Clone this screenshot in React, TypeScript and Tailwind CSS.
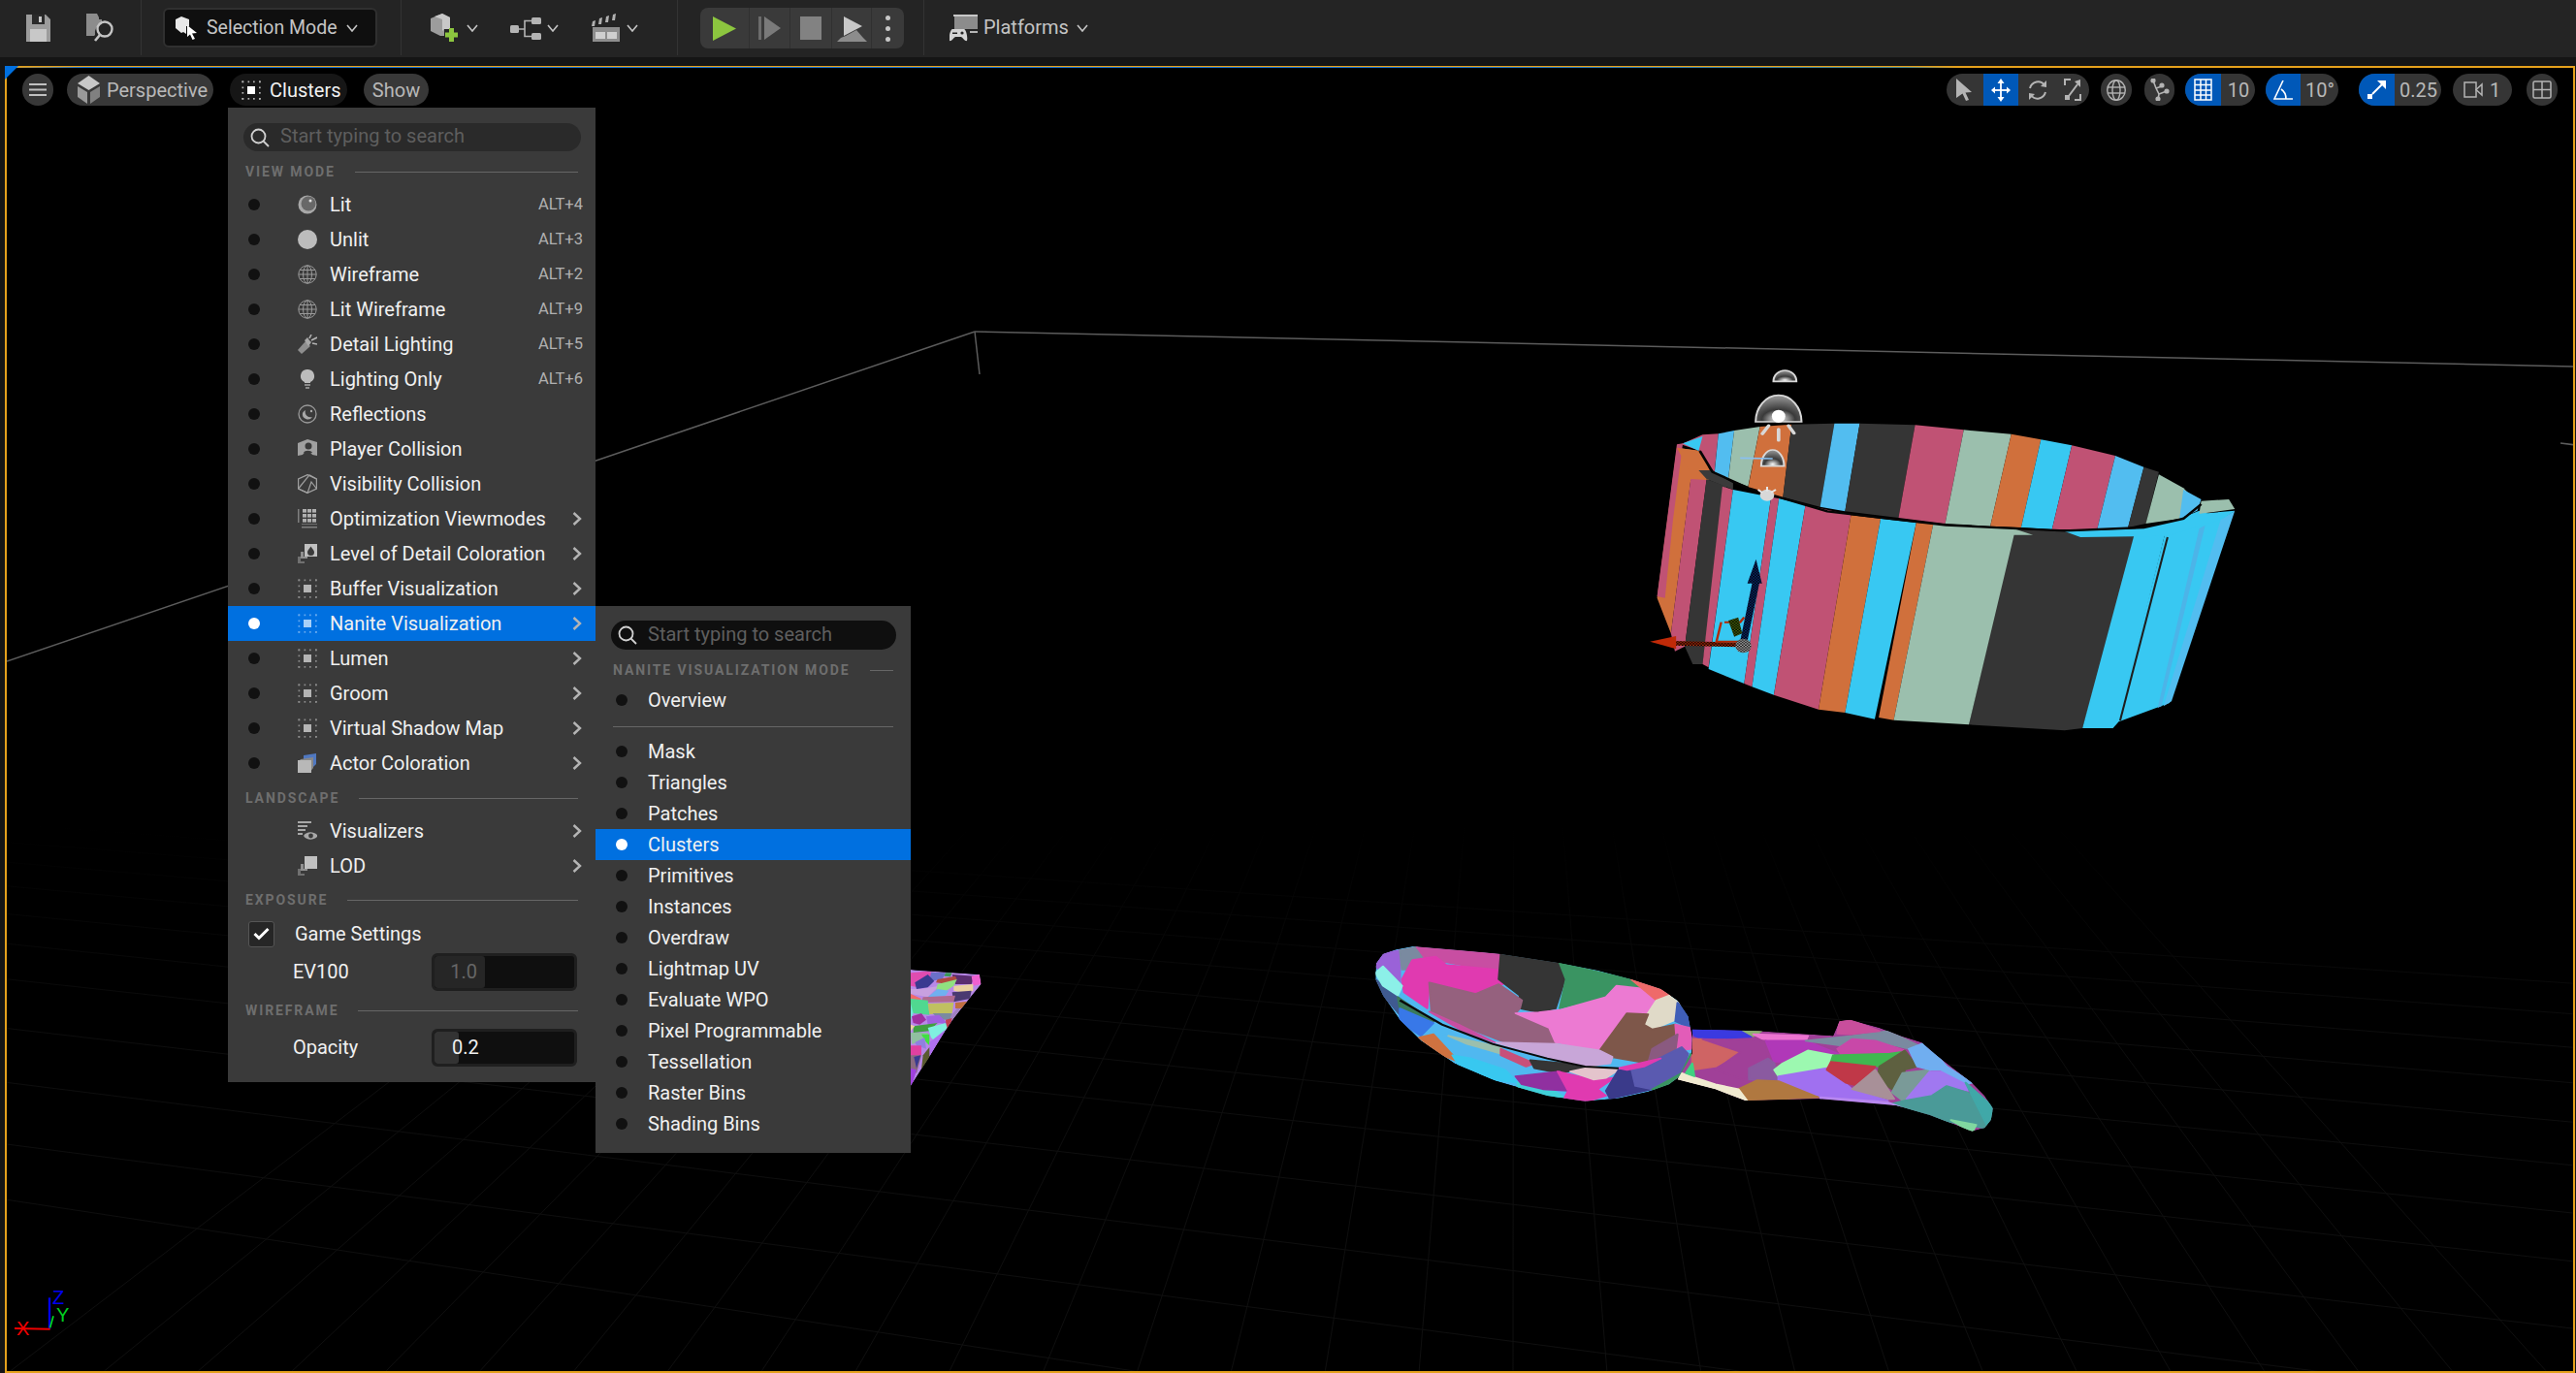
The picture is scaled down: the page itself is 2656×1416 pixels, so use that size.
import React from "react";

type Poly = [string, string];

const ringPolys: Poly[] = [
  ["#d0703c", "120,275 180,285 215,375 155,375 105,850 70,740"],
  ["#c05274", "120,265 135,262 110,500 90,740 70,735"],
  ["#c05274", "155,372 195,375 140,890 115,905 105,850"],
  ["#353535", "195,372 245,395 185,945 160,945 140,890"],
  ["#c05274", "235,395 262,405 200,955 185,945"],
  ["#38c8f2", "262,405 358,428 290,1005 200,960"],
  ["#c05274", "358,428 378,432 310,1015 290,1005"],
  ["#38c8f2", "378,432 445,452 365,1040 310,1015"],
  ["#c05274", "445,452 560,484 478,1085 365,1040"],
  ["#d0703c", "560,484 635,495 545,1095 478,1085"],
  ["#38c8f2", "635,495 725,507 620,1115 545,1095"],
  ["#d0703c", "725,507 768,511 668,1118 630,1110"],
  ["#353535", "972,528 1100,533 1280,525 1290,548 1145,1143 1100,1150 858,1132"],
  ["#9bbfad", "768,511 972,526 1020,545 972,545 858,1132 668,1118"],
  ["#38c8f2", "1280,525 1360,510 1235,1125 1222,1143 1145,1143"],
  ["#38c8f2", "1360,510 1440,470 1500,495 1365,1065 1232,1125"],
  ["#52bdf0", "1495,495 1530,470 1370,1060 1350,1075"],
  ["#4cb4e8", "1440,525 1455,515 1345,1075 1335,1080"],
  ["#c05274", "185,235 225,232 215,350 205,340 180,285 130,265"],
  ["#52bdf0", "225,232 265,222 250,370 215,355"],
  ["#9bbfad", "265,222 330,210 300,395 250,372"],
  ["#d0703c", "330,210 410,203 388,430 300,398"],
  ["#353535", "410,203 518,200 482,458 388,428"],
  ["#52bdf0", "518,200 582,200 545,472 482,458"],
  ["#353535", "582,200 722,205 680,492 545,472"],
  ["#c05274", "722,205 845,220 798,510 680,492"],
  ["#9bbfad", "845,220 965,233 912,518 798,510"],
  ["#d0703c", "965,233 1040,250 990,522 912,518"],
  ["#38c8f2", "1040,250 1118,268 1068,528 990,522"],
  ["#c05274", "1118,268 1228,300 1182,528 1068,528"],
  ["#52bdf0", "1228,300 1300,335 1260,522 1182,528"],
  ["#353535", "1300,335 1338,350 1305,510 1260,522"],
  ["#9bbfad", "1338,358 1400,400 1440,450 1390,495 1305,510"],
  ["#52bdf0", "1400,405 1445,435 1435,470 1390,495"],
  ["#9bbfad", "1445,440 1515,435 1530,465 1440,480"],
  ["#38c8f2", "1100,534 1300,525 1440,480 1530,470 1500,495 1360,548 1140,552"],
  ["#d0703c", "120,275 175,285 215,375 160,368"],
  ["#38c8f2", "135,262 185,240 175,285"],
  ["#3a3a3a", "205,345 262,385 262,405 195,372 175,345"],
];

const bowlOutline =
  "42,130 44,100 60,72 90,58 130,48 240,60 340,72 480,100 570,122 650,150 720,180 760,215 785,265 795,330 793,390 775,440 740,475 690,498 620,518 540,527 450,510 330,465 230,410 150,340 100,275 60,200 42,150";

const handleOutline =
  "795,305 950,310 1130,325 1145,280 1170,275 1240,300 1290,325 1340,345 1375,385 1420,430 1460,470 1490,510 1510,550 1505,585 1490,610 1460,620 1420,600 1360,570 1280,540 1100,520 920,525 850,490 760,460 795,380";

const bowlPolys: Poly[] = [
  ["#9a62d8", "42,110 60,70 100,60 100,170 60,130"],
  ["#7a8aa0", "100,60 140,50 160,80 120,120 105,120"],
  ["#c84ea2", "140,50 340,72 345,130 330,125 160,85"],
  ["#e03ab0", "105,150 130,90 185,80 210,105 290,115 330,120 345,165 280,195 170,160 165,240 110,190"],
  ["#353535", "340,72 480,100 497,130 470,240 430,252 385,240 385,200 335,150"],
  ["#3a9462", "480,100 650,150 670,178 615,170 590,205 480,240 495,150"],
  ["#95617e", "170,160 280,195 335,165 390,215 385,240 375,255 460,300 470,350 350,345 240,290 175,250"],
  ["#ec7ad2", "375,255 430,252 480,245 590,205 615,170 690,180 708,215 708,260 640,255 590,340 575,370 470,345 455,300"],
  ["#ee6a6a", "650,150 720,180 745,198 710,215"],
  ["#e0dac8", "710,215 740,200 765,225 755,275 700,305 680,290 690,255"],
  ["#7e574a", "640,255 690,258 680,290 700,305 755,290 765,320 700,365 690,410 600,390 575,370"],
  ["#3f5eb8", "760,222 785,260 790,300 755,280"],
  ["#e25cb8", "755,290 790,300 795,365 760,370"],
  ["#8a5a80", "700,365 760,320 755,370 690,410"],
  ["#c8a6d8", "325,345 470,350 575,370 605,390 600,410 540,420 450,390"],
  ["#c84ea2", "170,250 240,290 325,345 250,310"],
  ["#3f5a90", "42,150 100,210 100,260 60,200"],
  ["#8cf0e8", "42,130 60,110 105,170 95,200 60,170"],
  ["#3a7a5a", "95,205 180,280 160,285 100,240"],
  ["#3878e8", "100,240 180,285 150,325 100,280"],
  ["#50b8f0", "190,315 330,370 400,420 450,440 380,450 240,410 150,330"],
  ["#cf7240", "145,330 180,320 240,405 200,385"],
  ["#38c8f0", "225,385 270,395 350,430 380,470 320,460 240,415"],
  ["#9bbfad", "215,325 340,360 340,380 260,350"],
  ["#40d0d8", "380,470 460,490 490,515 450,515 380,485"],
  ["#c8507a", "340,365 420,410 400,420 340,385"],
  ["#353535", "410,400 490,410 540,425 480,440 420,425"],
  ["#9030a0", "375,450 480,435 500,495 440,490 390,475"],
  ["#e03ab0", "475,435 560,460 610,455 570,490 590,510 540,530 490,520 500,495"],
  ["#e4c4cc", "505,435 560,420 620,430 590,455 560,460"],
  ["#3a3a8a", "590,495 620,430 650,425 660,480 700,490 600,520"],
  ["#5a5ab0", "650,425 700,405 770,360 785,380 770,450 700,490 660,480"],
  ["#e03ab0", "620,425 720,395 680,420 640,430"],
  ["#3a9462", "770,440 792,380 798,400 780,450 710,500 700,490"],
];

const handlePolys: Poly[] = [
  ["#3a3ae0", "795,305 910,308 935,328 820,335 800,325"],
  ["#8cb070", "915,308 960,310 940,326"],
  ["#ec74d0", "940,320 1070,325 1065,340 970,340"],
  ["#cf6464", "795,335 820,335 910,375 850,420 795,430"],
  ["#a04098", "820,335 970,340 975,400 930,430 920,462 850,430 910,375"],
  ["#b038b8", "970,340 1065,340 1150,385 1075,370 1040,405 990,405"],
  ["#8a5aa0", "975,395 990,410 1000,465 930,460 930,425"],
  ["#9cf8b0", "1070,370 1130,385 1115,425 1000,450 990,430 1010,410"],
  ["#a070f0", "1000,450 1115,425 1175,490 1260,525 1100,515 1000,470"],
  ["#b07840", "905,490 950,462 1000,465 1095,515 925,525"],
  ["#f0ead0", "770,440 850,475 905,490 925,525 850,490 760,460"],
  ["#40d080", "795,410 800,450 780,440"],
  ["#7a8aa0", "1065,340 1175,325 1260,310 1350,365 1310,365 1230,340 1150,355"],
  ["#c848a8", "1140,365 1175,335 1230,340 1300,370 1265,380 1150,385"],
  ["#c84e9c", "1140,318 1145,280 1170,275 1240,310 1170,320"],
  ["#40b850", "1130,385 1265,380 1290,375 1240,420 1125,405"],
  ["#c03848", "1125,405 1230,420 1190,480 1160,470 1115,430"],
  ["#5e6040", "1240,420 1300,370 1330,420 1300,430 1295,480 1270,490 1235,460"],
  ["#7a9a98", "1295,440 1360,430 1360,460 1300,530 1270,500"],
  ["#a89098", "1175,490 1230,430 1275,520 1260,520"],
  ["#70aef0", "1310,365 1350,345 1400,420 1460,470 1445,475 1385,430 1360,430 1330,420"],
  ["#a078f0", "1305,520 1360,435 1385,435 1445,475 1450,495 1400,480 1360,510"],
  ["#4a9a98", "1270,535 1300,525 1365,510 1400,480 1450,500 1510,580 1490,610 1400,590"],
  ["#40a8a8", "1445,470 1515,550 1495,600"],
  ["#80d8a0", "1410,585 1470,600 1460,625"],
  ["#b888f0", "1100,515 1260,530 1290,545 1100,525"],
];

const triPolys: Poly[] = [
  ["#b888e8", "117,120 330,135 335,165 230,300 117,480"],
  ["#e04cb0", "117,130 165,125 195,130 160,150 140,175 117,170"],
  ["#6a70c8", "180,128 225,130 215,150 175,155"],
  ["#3a9a5a", "225,130 245,130 240,142 220,140"],
  ["#3a3a90", "130,160 170,135 190,155 170,175 135,180"],
  ["#5a2d70", "245,135 315,140 305,165 255,165"],
  ["#f060d0", "305,140 330,135 335,165 310,170"],
  ["#b04a40", "200,150 255,140 260,150 235,165 195,160"],
  ["#c8a0e0", "117,180 150,180 205,170 170,205 117,195"],
  ["#90e080", "200,165 260,150 250,170 220,190 195,185"],
  ["#ead0a0", "250,170 310,165 310,185 290,195 250,185"],
  ["#70b0f0", "170,205 200,180 235,185 225,200 185,205"],
  ["#4a3a70", "245,190 305,185 300,210 250,220"],
  ["#f06a6a", "117,195 150,210 145,215 117,210"],
  ["#b06a90", "155,205 255,200 250,220 150,222"],
  ["#50d890", "117,210 170,215 175,260 125,255 117,250"],
  ["#c0c060", "170,225 250,222 245,255 175,258"],
  ["#c07040", "255,222 295,218 275,240 255,240"],
  ["#7a8aa0", "185,255 245,255 240,275 205,275"],
  ["#70e8d8", "117,225 125,255 117,275"],
  ["#a030a0", "120,265 150,255 165,275 145,290 125,285"],
  ["#a060e0", "165,265 205,260 235,290 205,285 170,290"],
  ["#a080c0", "240,265 260,240 270,240 250,280"],
  ["#c04050", "225,275 245,270 240,295 228,305"],
  ["#40a040", "125,295 200,285 175,310 125,315"],
  ["#ead0a0", "117,290 130,295 117,310"],
  ["#80f0e0", "170,300 225,285 230,300 195,345 180,330"],
  ["#90c0a0", "117,315 170,315 175,340 120,350"],
  ["#40e040", "150,320 175,320 175,355 165,345"],
  ["#9080e0", "130,345 160,330 165,365 135,355"],
  ["#b070f0", "175,345 225,305 175,390"],
  ["#e040a0", "117,355 150,355 150,385 125,395 117,390"],
  ["#8a6a80", "117,385 150,385 135,440 117,430"],
  ["#3a3a90", "127,390 148,385 135,425"],
  ["#5a5a30", "155,385 175,360 175,395 150,430"],
  ["#a040e0", "117,425 135,430 125,465 117,480"],
];

const gridDepth = [-16, -15, -14, -13, -12, -11, -10, -9, -8, -7, -6, -5, -4, -3, -2, -1, 0, 1, 2, 3, 4, 5, 6, 7, 8, 9, 10, 11];
const gridCross: [number, number][] = [
  [1373, 0.152], [1297, 0.131], [1228, 0.125], [1165, 0.117], [1108, 0.11], [1067, 0.105],
  [1030, 0.098], [996, 0.092], [966, 0.086], [940, 0.08], [916, 0.074], [895, 0.068],
];

function Polys({ items, soft }: { items: Poly[]; soft?: boolean }) {
  return (
    <>
      {items.map(([fill, points], i) => (
        <polygon
          key={i}
          fill={fill}
          points={points}
          stroke={soft ? fill : undefined}
          strokeWidth={soft ? 5 : undefined}
          strokeLinejoin={soft ? "round" : undefined}
        />
      ))}
    </>
  );
}

function Dome({ cx, cy, r, ry }: { cx: number; cy: number; r: number; ry: number }) {
  return (
    <path
      d={`M${cx - r},${cy} A${r},${ry} 0 0 1 ${cx + r},${cy} Z`}
      fill="url(#domeFill)"
      stroke="#d8d8d8"
      strokeWidth="5"
    />
  );
}

function Scene() {
  return (
    <svg
      className="absolute left-[-7px] top-[-68px] w-[2656px] h-[1416px]"
      viewBox="0 0 2656 1416"
      xmlns="http://www.w3.org/2000/svg"
    >
      <defs>
        <linearGradient id="gridFade" gradientUnits="userSpaceOnUse" x1="0" y1="1416" x2="0" y2="850">
          <stop offset="0" stopColor="#0f0f0f" />
          <stop offset="0.6" stopColor="#0d0d0d" />
          <stop offset="1" stopColor="#000000" />
        </linearGradient>
        <radialGradient id="domeFill" cx="50%" cy="90%" r="80%">
          <stop offset="0" stopColor="#ffffff" />
          <stop offset="0.45" stopColor="#3a3a3a" />
          <stop offset="1" stopColor="#8a8a8a" />
        </radialGradient>
        <pattern id="checkBlue" width="8" height="8" patternUnits="userSpaceOnUse">
          <rect width="8" height="8" fill="#0a2a70" />
          <rect width="4" height="4" fill="#000000" />
          <rect x="4" y="4" width="4" height="4" fill="#000000" />
        </pattern>
        <pattern id="checkRed" width="8" height="8" patternUnits="userSpaceOnUse">
          <rect width="8" height="8" fill="#b02a08" />
          <rect width="4" height="4" fill="#000000" />
          <rect x="4" y="4" width="4" height="4" fill="#000000" />
        </pattern>
        <pattern id="checkGreen" width="8" height="8" patternUnits="userSpaceOnUse">
          <rect width="8" height="8" fill="#4a6a08" />
          <rect width="4" height="4" fill="#000000" />
          <rect x="4" y="4" width="4" height="4" fill="#000000" />
        </pattern>
        <pattern id="checkGray" width="8" height="8" patternUnits="userSpaceOnUse">
          <rect width="8" height="8" fill="#aaaaaa" />
          <rect width="4" height="4" fill="#111111" />
          <rect x="4" y="4" width="4" height="4" fill="#111111" />
        </pattern>
        <clipPath id="bowlClip">
          <polygon points={bowlOutline} />
        </clipPath>
        <clipPath id="handleClip">
          <polygon points={handleOutline} />
        </clipPath>
        <clipPath id="triClip">
          <polygon points="117,120 135,122 330,135 335,165 310,195 250,270 230,300 175,390 117,480" />
        </clipPath>
      </defs>

      <g stroke="url(#gridFade)" strokeWidth="1" fill="none">
        {gridDepth.map((k) => (
          <line key={k} x1={1560 + k * 97} y1={1416} x2={1560.5 + k * 97 * 0.45} y2={764} />
        ))}
        {gridCross.map(([y, s]) => (
          <line key={y} x1={0} y1={y - s * 900} x2={2656} y2={y + s * 1756} />
        ))}
      </g>

      <g stroke="#5c5c5c" strokeWidth="1.5" fill="none">
        <line x1="7" y1="682" x2="1005" y2="342" />
        <line x1="1005" y1="342" x2="2656" y2="378" />
        <line x1="1005" y1="342" x2="1010" y2="386" />
        <line x1="2640" y1="457" x2="2656" y2="459" />
      </g>

      <g transform="translate(1680 370) scale(0.408 0.3333)">
        <Polys items={ringPolys} />
        <polyline
          points="178,285 210,350 300,400 500,472 800,515 1100,532 1300,522 1400,495 1445,450"
          fill="none"
          stroke="#050505"
          strokeWidth="7"
        />
        <line x1="1360" y1="552" x2="1240" y2="1120" stroke="#1e1e1e" strokeWidth="5" />
        <Dome cx={393} cy={70} r={29} ry={34} />
        <Dome cx={377} cy={195} r={58} ry={82} />
        <ellipse cx="377" cy="178" rx="17" ry="20" fill="#ffffff" />
        <g stroke="#d8d8d8" strokeWidth="9" strokeLinecap="round" fill="none">
          <line x1="352" y1="207" x2="336" y2="232" />
          <line x1="377" y1="218" x2="377" y2="252" />
          <line x1="402" y1="207" x2="416" y2="230" />
        </g>
        <Dome cx={362} cy={332} r={29} ry={50} />
        <line x1="280" y1="307" x2="362" y2="309" stroke="#8ac0f0" strokeWidth="5" />
        <circle cx="348" cy="422" r="18" fill="#d8d8d8" />
        <g stroke="#e8e8e8" strokeWidth="5">
          <line x1="348" y1="396" x2="348" y2="410" />
          <line x1="325" y1="405" x2="336" y2="414" />
          <line x1="370" y1="405" x2="358" y2="414" />
        </g>
        <polyline points="320,690 288,880" stroke="url(#checkBlue)" strokeWidth="18" fill="none" />
        <polygon points="320,620 298,695 335,695" fill="url(#checkBlue)" />
        <line x1="110" y1="880" x2="285" y2="885" stroke="url(#checkRed)" strokeWidth="14" />
        <polygon points="52,875 118,858 118,898" fill="#c02a08" />
        <path d="M240,815 L280,815 L290,800 M232,815 L220,875 L290,875" fill="none" stroke="#b02a08" strokeWidth="6" />
        <path d="M250,810 L275,800 L285,850 L265,860 Z" fill="url(#checkGreen)" />
        <ellipse cx="288" cy="888" rx="20" ry="22" fill="url(#checkGray)" />
      </g>

      <g transform="translate(1400 960) scale(0.4337 0.3333)">
        <g clipPath="url(#bowlClip)">
          <polygon fill="#50b8f0" points={bowlOutline} />
          <Polys items={bowlPolys} soft />
        </g>
        <polyline
          points="100,215 200,290 320,350 450,395 540,420 620,425"
          fill="none"
          stroke="#0a0a0a"
          strokeWidth="6"
        />
        <g clipPath="url(#handleClip)">
          <polygon fill="#a04098" points={handleOutline} />
          <Polys items={handlePolys} soft />
        </g>
      </g>

      <g transform="translate(900 960) scale(0.3333)" clipPath="url(#triClip)">
        <Polys items={triPolys} />
      </g>

      <g transform="translate(0 1300) scale(0.3333)">
        <line x1="153" y1="115" x2="153" y2="212" stroke="#0000f0" strokeWidth="7" />
        <line x1="45" y1="210" x2="155" y2="212" stroke="#f00000" strokeWidth="6" />
        <line x1="155" y1="208" x2="165" y2="172" stroke="#00e020" strokeWidth="5" />
      </g>
      <g fontFamily="'Liberation Sans', sans-serif" fontSize="20">
        <text x="54" y="1345" fill="#0000f0">Z</text>
        <text x="58" y="1363" fill="#00d020">Y</text>
        <text x="17" y="1377" fill="#f00000">X</text>
      </g>
    </svg>
  );
}

function Chevron({ className }: { className: string }) {
  return (
    <svg className={className} viewBox="0 0 12 8" fill="none" stroke="#c4c4c4" strokeWidth="1.6">
      <polyline points="1,1 6,7 11,1" />
    </svg>
  );
}

function Divider({ className }: { className: string }) {
  return <div className={`w-px h-[57px] bg-[#333333] ${className}`} />;
}

function TopBar() {
  return (
    <div className="h-[59px] bg-[#242424] flex items-start shrink-0">
      <svg className="w-[25px] h-[28px] mt-[15px] ml-[27px]" viewBox="0 0 25 28">
        <path d="M0 0H20L25 5V28H0Z" fill="#9c9c9c" />
        <rect x="4" y="15" width="17" height="13" fill="#c8c8c8" />
        <rect x="6" y="0" width="13" height="10" fill="#2a2a2a" />
        <rect x="13" y="2" width="3" height="6" fill="#c8c8c8" />
      </svg>
      <svg className="w-[30px] h-[29px] mt-[14px] ml-[37px]" viewBox="0 0 30 29">
        <path d="M0 0H11L13 4V6H16V11A9 9 0 0 0 9 22L8 23H0Z" fill="#8c8c8c" />
        <circle cx="19" cy="16" r="7.5" fill="none" stroke="#c4c4c4" strokeWidth="2.4" />
        <line x1="14" y1="22" x2="9" y2="28" stroke="#c4c4c4" strokeWidth="2.6" />
      </svg>
      <Divider className="ml-[26px]" />
      <div className="ml-[22px] mt-[8px] w-[221px] h-[41px] rounded-md bg-[#0f0f0f] border-2 border-[#303030] flex items-center pl-[11px]">
        <svg className="w-[22px] h-[24px]" viewBox="0 0 22 24">
          <path d="M6 0L14 3V10L11 10L11 18L8 16L6 17L0 12V3Z" fill="#e8e8e8" />
          <path d="M12 9L22 17L17 17.5L20 23L17.5 24L15 18.5L12 21Z" fill="#ffffff" />
        </svg>
        <span className="ml-[10px] text-[19.5px] text-[#c4c4c4] leading-none">Selection Mode</span>
        <Chevron className="w-[12px] h-[8px] ml-[9px]" />
      </div>
      <Divider className="ml-[24px]" />
      <svg className="w-[30px] h-[29px] mt-[14px] ml-[30px]" viewBox="0 0 30 29">
        <path d="M12 0L20 4V16H14V23H10L0 18V5Z" fill="#9c9c9c" />
        <path d="M12 0L20 4V16H14L12 18V6L4 3Z" fill="#c8c8c8" />
        <rect x="19" y="15" width="5" height="14" fill="#8cc63f" />
        <rect x="15" y="19.5" width="13" height="5" fill="#8cc63f" />
      </svg>
      <Chevron className="w-[12px] h-[8px] mt-[25px] ml-[7px]" />
      <svg className="w-[32px] h-[23px] mt-[18px] ml-[33px]" viewBox="0 0 32 23">
        <rect x="0" y="8" width="9" height="8" rx="1.5" fill="#b4b4b4" />
        <rect x="22" y="0" width="10" height="7" rx="1.5" fill="#b4b4b4" />
        <rect x="22" y="16" width="10" height="7" rx="1.5" fill="#b4b4b4" />
        <path d="M9 12H15V3.5H22M15 12V19.5H22" fill="none" stroke="#b4b4b4" strokeWidth="1.6" />
      </svg>
      <Chevron className="w-[12px] h-[8px] mt-[25px] ml-[6px]" />
      <svg className="w-[29px] h-[29px] mt-[14px] ml-[34px]" viewBox="0 0 29 29">
        <g fill="#b0b0b0">
          <path d="M1 8L0 13H3L4 7Z" />
          <path d="M8 5L7 11H10L11 4Z" />
          <path d="M15 3L14 9H17L18 2Z" />
          <path d="M22 1L21 7H24L25 0Z" />
        </g>
        <rect x="1" y="14" width="28" height="15" fill="#8e8e8e" />
        <rect x="4" y="19" width="10" height="7" fill="#d0d0d0" />
        <rect x="16" y="19" width="10" height="7" fill="#d0d0d0" />
      </svg>
      <Chevron className="w-[12px] h-[8px] mt-[25px] ml-[7px]" />
      <Divider className="ml-[40px]" />
      <div className="ml-[23px] mt-[8px] w-[210px] h-[42px] rounded-lg bg-[#3a3a3a] flex">
        <div className="w-[51px] flex items-center justify-center border-r border-[#303030]">
          <svg className="w-[24px] h-[25px]" viewBox="0 0 24 25"><polygon points="0,0 24,12.5 0,25" fill="#8cc63f" /></svg>
        </div>
        <div className="w-[42px] flex items-center justify-center border-r border-[#303030]">
          <svg className="w-[23px] h-[24px]" viewBox="0 0 23 24">
            <rect x="0" y="0" width="3" height="24" fill="#6c6c6c" />
            <polygon points="6,0 23,12 6,24" fill="#7a7a7a" />
          </svg>
        </div>
        <div className="w-[43px] flex items-center justify-center border-r border-[#303030]">
          <div className="w-[22px] h-[24px] bg-[#828282]" />
        </div>
        <div className="w-[41px] flex items-start pt-[9px] justify-center border-r border-[#303030]">
          <svg className="w-[31px] h-[26px]" viewBox="0 0 31 26">
            <polygon points="7,0 26,10 7,20" fill="#c8c8c8" />
            <polygon points="4,22 9,20 20,14 27,22 31,26 0,26" fill="#8c8c8c" />
          </svg>
        </div>
        <div className="flex-1 flex flex-col items-center justify-center gap-[6px]">
          <div className="w-[5px] h-[5px] rounded-full bg-[#c8c8c8]" />
          <div className="w-[5px] h-[5px] rounded-full bg-[#c8c8c8]" />
          <div className="w-[5px] h-[5px] rounded-full bg-[#c8c8c8]" />
        </div>
      </div>
      <Divider className="ml-[20px]" />
      <svg className="w-[29px] h-[28px] mt-[15px] ml-[26px]" viewBox="0 0 29 28">
        <rect x="5" y="0" width="24" height="15" fill="#8c8c8c" />
        <rect x="4" y="0" width="25" height="2" fill="#c8c8c8" />
        <rect x="21" y="17" width="8" height="2" fill="#b4b4b4" />
        <path d="M3 15H15C17 15 19 23 18 27C16 28 14 24 12 23H6C4 24 2 28 0 27C-1 23 1 15 3 15Z" fill="#d4d4d4" />
        <circle cx="13" cy="19" r="1.6" fill="#242424" />
        <rect x="3" y="18.5" width="5" height="1.5" fill="#242424" />
      </svg>
      <span className="ml-[6px] mt-[17px] text-[20px] text-[#c4c4c4] leading-[22px]">Platforms</span>
      <Chevron className="w-[12px] h-[8px] mt-[25px] ml-[8px]" />
    </div>
  );
}

const pillBase = "h-[33px] rounded-full flex items-center";

function DottedSquare({ centerFill, dotFill }: { centerFill: string; dotFill: string }) {
  return (
    <svg className="w-[20px] h-[20px]" viewBox="0 0 20 20">
      <g fill={dotFill}>
        {[0.5, 6.5, 12, 18].map((v) => (
          <React.Fragment key={v}>
            <rect x={v} y={0.5} width={1.7} height={1.7} />
            <rect x={v} y={18} width={1.7} height={1.7} />
            <rect x={0.5} y={v} width={1.7} height={1.7} />
            <rect x={18} y={v} width={1.7} height={1.7} />
          </React.Fragment>
        ))}
      </g>
      <rect x="6" y="6" width="8" height="8" fill={centerFill} />
    </svg>
  );
}

function BlueCell({ className, children }: { className: string; children: React.ReactNode }) {
  return <div className={`bg-[#0058b8] h-full flex items-center justify-center ${className}`}>{children}</div>;
}

function ViewportBar() {
  return (
    <div className="relative flex items-center h-[33px] mt-[6px] pl-[16px] pr-[16px] text-[20px] text-[#b8b8b8]">
      <div className={`${pillBase} w-[32px] bg-[#383838] justify-center`}>
        <svg className="w-[18px] h-[15px]" viewBox="0 0 18 15" stroke="#c0c0c0" strokeWidth="2">
          <line x1="0" y1="2" x2="18" y2="2" />
          <line x1="0" y1="7.5" x2="18" y2="7.5" />
          <line x1="0" y1="13" x2="18" y2="13" />
        </svg>
      </div>
      <div className={`${pillBase} w-[151px] ml-[14px] bg-[#383838] pl-[11px]`}>
        <svg className="w-[23px] h-[29px]" viewBox="0 0 23 29">
          <polygon points="11.5,0 23,8 11.5,15 0,8" fill="#c8c8c8" />
          <polygon points="0,11 10,17 10,29 0,22" fill="#9a9a9a" />
          <polygon points="23,11 13,17 13,29 23,22" fill="#808080" />
        </svg>
        <span className="ml-[7px]">Perspective</span>
      </div>
      <div className={`${pillBase} w-[121px] ml-[17px] bg-[#161616] pl-[12px] text-[#f0f0f0]`}>
        <DottedSquare centerFill="#ffffff" dotFill="#b0b0b0" />
        <span className="ml-[9px]">Clusters</span>
      </div>
      <div className={`${pillBase} w-[67px] ml-[17px] bg-[#383838] justify-center`}>Show</div>

      <div className="ml-auto flex items-center">
        <div className={`${pillBase} w-[147px] bg-[#353535] overflow-hidden`}>
          <div className="w-[37px] flex justify-center">
            <svg className="w-[17px] h-[23px]" viewBox="0 0 17 23"><path d="M0 0L16 14L9.5 14.5L13 22L10 23L6.5 15.5L0 20Z" fill="#b4b4b4" /></svg>
          </div>
          <BlueCell className="w-[36px] ml-px">
            <svg className="w-[20px] h-[24px]" viewBox="0 0 20 24" fill="#ffffff">
              <rect x="9.1" y="3" width="1.8" height="18" />
              <rect x="2" y="11.1" width="16" height="1.8" />
              <polygon points="10,0 13.5,5 6.5,5" />
              <polygon points="10,24 13.5,19 6.5,19" />
              <polygon points="0,12 4,8.5 4,15.5" />
              <polygon points="20,12 16,8.5 16,15.5" />
            </svg>
          </BlueCell>
          <div className="w-[37px] ml-px flex justify-center">
            <svg className="w-[20px] h-[22px]" viewBox="0 0 20 22" fill="none" stroke="#b4b4b4" strokeWidth="2">
              <path d="M2 9A8.5 9 0 0 1 17 6" />
              <path d="M18 13A8.5 9 0 0 1 3 16" />
              <polygon points="19,1 19,8 13,7" fill="#b4b4b4" stroke="none" />
              <polygon points="1,21 1,14 7,15" fill="#b4b4b4" stroke="none" />
            </svg>
          </div>
          <div className="flex-1 flex justify-center">
            <svg className="w-[18px] h-[23px]" viewBox="0 0 18 23" fill="none" stroke="#b4b4b4" strokeWidth="2">
              <path d="M1 7V1H7M11 22H17V16" />
              <line x1="5" y1="18" x2="14" y2="6" />
              <polygon points="17,1 17,9 11,3" fill="#b4b4b4" stroke="none" />
              <rect x="1" y="17" width="5" height="5" fill="#b4b4b4" stroke="none" />
            </svg>
          </div>
        </div>
        <div className={`${pillBase} w-[32px] ml-[12px] bg-[#353535] justify-center`}>
          <svg className="w-[20px] h-[22px]" viewBox="0 0 20 22" fill="none" stroke="#b4b4b4" strokeWidth="1.4">
            <ellipse cx="10" cy="11" rx="9.3" ry="10.3" />
            <ellipse cx="10" cy="11" rx="4" ry="10.3" />
            <line x1="1" y1="8" x2="19" y2="8" />
            <line x1="1" y1="14" x2="19" y2="14" />
          </svg>
        </div>
        <div className={`${pillBase} w-[31px] ml-[13px] bg-[#353535] justify-center`}>
          <svg className="w-[20px] h-[23px]" viewBox="0 0 20 23" fill="none" stroke="#b4b4b4" strokeWidth="1.6">
            <path d="M3 2L6 10L9 16L17 13M6 10L12 8M9 16L8 22" />
            <circle cx="3" cy="2" r="1.8" fill="#b4b4b4" />
            <circle cx="12" cy="7" r="1.8" fill="#b4b4b4" />
            <circle cx="17" cy="13" r="1.8" fill="#b4b4b4" />
            <circle cx="8" cy="21" r="1.8" fill="#b4b4b4" />
          </svg>
        </div>
        <div className={`${pillBase} w-[72px] ml-[11px] bg-[#353535] overflow-hidden`}>
          <BlueCell className="w-[37px]">
            <svg className="w-[19px] h-[23px]" viewBox="0 0 19 23" fill="none" stroke="#ffffff" strokeWidth="1.5">
              <rect x="1" y="1" width="17" height="21" />
              <path d="M7 1V22M12.5 1V22M1 6.5H18M1 12H18M1 17H18" />
            </svg>
          </BlueCell>
          <span className="flex-1 text-center ml-px">10</span>
        </div>
        <div className={`${pillBase} w-[75px] ml-[11px] bg-[#353535] overflow-hidden`}>
          <BlueCell className="w-[36px]">
            <svg className="w-[20px] h-[20px]" viewBox="0 0 20 20" fill="none" stroke="#ffffff" strokeWidth="1.6">
              <path d="M10 0L1 19H20M8 9C11 11 13 15 13 19" />
            </svg>
          </BlueCell>
          <span className="flex-1 text-center ml-px">10°</span>
        </div>
        <div className={`${pillBase} w-[85px] ml-[21px] bg-[#353535] overflow-hidden`}>
          <BlueCell className="w-[37px]">
            <svg className="w-[19px] h-[19px]" viewBox="0 0 19 19" fill="#ffffff">
              <rect x="0" y="14" width="5" height="5" />
              <polygon points="19,0 19,9 10,0" />
              <line x1="5" y1="14" x2="15" y2="4" stroke="#ffffff" strokeWidth="2" />
            </svg>
          </BlueCell>
          <span className="flex-1 text-center ml-px">0.25</span>
        </div>
        <div className={`${pillBase} w-[61px] ml-[12px] bg-[#353535] pl-[11px]`}>
          <svg className="w-[20px] h-[17px]" viewBox="0 0 20 17" fill="none" stroke="#b4b4b4" strokeWidth="1.5">
            <rect x="1" y="1" width="12" height="15" />
            <path d="M13 8.5L19 3V14Z" />
          </svg>
          <span className="ml-[7px]">1</span>
        </div>
        <div className={`${pillBase} w-[32px] ml-[15px] bg-[#353535] justify-center`}>
          <svg className="w-[20px] h-[19px]" viewBox="0 0 20 19" fill="none" stroke="#b4b4b4" strokeWidth="1.5">
            <rect x="1" y="1" width="18" height="17" rx="1.5" />
            <path d="M10 1V18M1 9.5H19" />
          </svg>
        </div>
      </div>
    </div>
  );
}

const g = "#b0b0b0";

function IconLit() {
  return (
    <svg className="w-full h-full" viewBox="0 0 20 20">
      <circle cx="10" cy="10" r="9.5" fill="#a8a8a8" />
      <circle cx="11" cy="9" r="7.5" fill="#686868" />
      <circle cx="13" cy="6" r="1.5" fill="#e0e0e0" />
    </svg>
  );
}
function IconUnlit() {
  return (
    <svg className="w-full h-full" viewBox="0 0 20 20"><circle cx="10" cy="10" r="10" fill="#bcbcbc" /></svg>
  );
}
function IconWire() {
  return (
    <svg className="w-full h-full" viewBox="0 0 20 20" fill="none" stroke="#9a9a9a" strokeWidth="1">
      <circle cx="10" cy="10" r="9.2" />
      <ellipse cx="10" cy="10" rx="4.5" ry="9.2" />
      <path d="M10 1V19M1 10H19M2 5.5H18M2 14.5H18" />
    </svg>
  );
}
function IconDetail() {
  return (
    <svg className="w-full h-full" viewBox="0 0 20 20">
      <polygon points="0,16 8,7 13,12 4,20" fill="#8e8e8e" />
      <polygon points="7,6 10,3 12,6 14,8 11,12" fill="#a8a8a8" />
      <g stroke="#b4b4b4" strokeWidth="1.6">
        <line x1="12" y1="4" x2="14" y2="0" />
        <line x1="14" y1="6" x2="20" y2="3" />
        <line x1="15" y1="9" x2="20" y2="10" />
      </g>
    </svg>
  );
}
function IconBulb() {
  return (
    <svg className="w-full h-full" viewBox="0 0 20 20">
      <path d="M10 0A6.8 6.8 0 0 1 13 13V14H7V13A6.8 6.8 0 0 1 10 0Z" fill="#bcbcbc" />
      <rect x="7" y="15" width="6" height="2" fill="#8a8a8a" />
      <rect x="8" y="18" width="4" height="2" fill="#8a8a8a" />
    </svg>
  );
}
function IconReflect() {
  return (
    <svg className="w-full h-full" viewBox="0 0 20 20">
      <circle cx="10" cy="10" r="9" fill="none" stroke="#9a9a9a" strokeWidth="1.3" />
      <path d="M5 9A5.5 5.5 0 0 0 15 13A5.5 5.5 0 0 1 8 6A5.5 5.5 0 0 0 5 9Z" fill="#a8a8a8" />
      <circle cx="14" cy="7" r="1.2" fill="#a8a8a8" />
    </svg>
  );
}
function IconPlayer() {
  return (
    <svg className="w-full h-full" viewBox="0 0 20 20">
      <path d="M0 4L5 2L10 0L20 3V17L15 16C14 14 12 13 10 13C8 13 6 14 5 16L0 17Z" fill="#a0a0a0" />
      <circle cx="11" cy="7" r="3.5" fill="#3a3a3a" />
      <path d="M6 14C7 11 14 11 15 14Z" fill="#3a3a3a" />
    </svg>
  );
}
function IconVis() {
  return (
    <svg className="w-full h-full" viewBox="0 0 20 20" fill="none" stroke="#a0a0a0" strokeWidth="1.2">
      <polygon points="10,0.6 19.4,5 19.4,15 10,19.4 0.6,15 0.6,5" />
      <path d="M0.6 15L12 0.8M12 0.8L19.4 5M0.6 15L10 19.4L14 8L19.4 15" />
    </svg>
  );
}
function IconOpt() {
  return (
    <svg className="w-full h-full" viewBox="0 0 20 20">
      <rect x="0" y="0" width="1.5" height="14" fill="#808080" />
      <rect x="4" y="18" width="16" height="1.5" fill="#808080" />
      <rect x="4" y="15" width="16" height="1.2" fill="#6a6a6a" />
      <g fill={g}>
        {[5, 10, 15].map((x) =>
          [0, 5, 10].map((y) => <rect key={`${x}${y}`} x={x} y={y} width="4" height="3.6" />)
        )}
      </g>
    </svg>
  );
}
function IconLodColor() {
  return (
    <svg className="w-full h-full" viewBox="0 0 20 20">
      <path d="M0 20V13H3V18H7V20Z" fill="#707070" />
      <path d="M3 15V8H6V13H10V15Z" fill="#909090" />
      <rect x="7" y="0" width="13" height="13" fill="#c0c0c0" />
      <path d="M13.5 2.5C15 5 17 6.5 17 8.5A3.5 3.5 0 0 1 10 8.5C10 6.5 12 5 13.5 2.5Z" fill="#3a3a3a" />
    </svg>
  );
}
function IconActor() {
  return (
    <svg className="w-full h-full" viewBox="0 0 20 20">
      <polygon points="6,2 19,0 19,11 14,16 6,16" fill="#5078c0" />
      <polygon points="3,6 16,4 16,15 12,20 0,20 0,9" fill="#888888" />
      <rect x="0" y="7" width="14" height="13" fill="#b8b8b8" />
    </svg>
  );
}
function IconVisualizers() {
  return (
    <svg className="w-full h-full" viewBox="0 0 20 20">
      <rect x="0" y="0" width="14" height="2" fill="#a8a8a8" />
      <rect x="0" y="4" width="10" height="2" fill="#a8a8a8" />
      <rect x="0" y="8" width="8" height="2" fill="#a8a8a8" />
      <rect x="0" y="12" width="5" height="2" fill="#a8a8a8" />
      <path d="M6 15C9 10 17 10 21 15C17 20 9 20 6 15Z" fill="#a8a8a8" />
      <circle cx="13.5" cy="15" r="2.4" fill="#3a3a3a" />
    </svg>
  );
}
function IconLod() {
  return (
    <svg className="w-full h-full" viewBox="0 0 20 20">
      <path d="M0 20V13H3V18H7V20Z" fill="#707070" />
      <path d="M3 15V8H6V13H10V15Z" fill="#909090" />
      <rect x="7" y="0" width="13" height="13" fill="#c0c0c0" />
    </svg>
  );
}

function Dot({ on }: { on?: boolean }) {
  return <div className={`w-[12px] h-[12px] rounded-full shrink-0 ${on ? "bg-white" : "bg-[#111111]"}`} />;
}

function MenuChevron() {
  return (
    <svg className="w-[10px] h-[14px]" viewBox="0 0 10 14" fill="none" stroke="#b4b4b4" strokeWidth="2.4">
      <polyline points="1.5,1 8,7 1.5,13" />
    </svg>
  );
}

type RowData = { label: string; icon: React.ReactNode; key?: string; sub?: boolean; on?: boolean };

const nodes = (fill: string) => <DottedSquare centerFill={fill} dotFill="#8a8a8a" />;

const viewRows: RowData[] = [
  { label: "Lit", icon: <IconLit />, key: "ALT+4" },
  { label: "Unlit", icon: <IconUnlit />, key: "ALT+3" },
  { label: "Wireframe", icon: <IconWire />, key: "ALT+2" },
  { label: "Lit Wireframe", icon: <IconWire />, key: "ALT+9" },
  { label: "Detail Lighting", icon: <IconDetail />, key: "ALT+5" },
  { label: "Lighting Only", icon: <IconBulb />, key: "ALT+6" },
  { label: "Reflections", icon: <IconReflect /> },
  { label: "Player Collision", icon: <IconPlayer /> },
  { label: "Visibility Collision", icon: <IconVis /> },
  { label: "Optimization Viewmodes", icon: <IconOpt />, sub: true },
  { label: "Level of Detail Coloration", icon: <IconLodColor />, sub: true },
  { label: "Buffer Visualization", icon: nodes("#b4b4b4"), sub: true },
  { label: "Nanite Visualization", icon: <DottedSquare centerFill="#a8d0f8" dotFill="#66a8ee" />, sub: true, on: true },
  { label: "Lumen", icon: nodes("#b4b4b4"), sub: true },
  { label: "Groom", icon: nodes("#b4b4b4"), sub: true },
  { label: "Virtual Shadow Map", icon: nodes("#b4b4b4"), sub: true },
  { label: "Actor Coloration", icon: <IconActor />, sub: true },
];

const naniteRows = [
  "Mask", "Triangles", "Patches", "Clusters", "Primitives", "Instances", "Overdraw", "Lightmap UV",
  "Evaluate WPO", "Pixel Programmable", "Tessellation", "Raster Bins", "Shading Bins",
];

function ViewRow({ r }: { r: RowData }) {
  return (
    <div className={`h-[36px] flex items-center pl-[21px] pr-[13px] ${r.on ? "bg-[#0070e0]" : ""}`}>
      <Dot on={r.on} />
      <div className="w-[20px] h-[20px] ml-[39px] shrink-0">{r.icon}</div>
      <span className="ml-[13px] text-[20px] text-[#f0f0f0] whitespace-nowrap">{r.label}</span>
      {r.key ? <span className="ml-auto text-[16.5px] text-[#b0b0b0]">{r.key}</span> : null}
      {r.sub ? <span className="ml-auto mr-px flex"><MenuChevron /></span> : null}
    </div>
  );
}

function SectionLabel({ text, className }: { text: string; className: string }) {
  return (
    <div className={`h-[20px] flex items-center ${className}`}>
      <span className="text-[14px] font-bold tracking-[1.9px] text-[#6e6e6e] whitespace-nowrap">{text}</span>
      <div className="flex-1 h-px bg-[#666666] ml-[20px]" />
    </div>
  );
}

function SearchBox({ className }: { className: string }) {
  return (
    <div className={`rounded-full flex items-center ${className}`}>
      <svg className="w-[20px] h-[20px] ml-[7px] shrink-0" viewBox="0 0 20 20" fill="none" stroke="#d0d0d0" strokeWidth="1.8">
        <circle cx="8.5" cy="8.5" r="7" />
        <line x1="13.5" y1="13.5" x2="19" y2="19" />
      </svg>
      <span className="ml-[11px] pb-[3px] text-[20px] text-[#5e5e5e]">Start typing to search</span>
    </div>
  );
}

function MainMenu() {
  return (
    <div className="absolute left-[235px] top-[111px] w-[379px] bg-[#3a3a3a] pt-[16px] pb-[16px]">
      <SearchBox className="ml-[16px] w-[348px] h-[29px] bg-[#2a2a2a]" />
      <SectionLabel text="VIEW MODE" className="mt-[11px] mb-[6px] ml-[18px] mr-[18px]" />
      {viewRows.map((r) => (
        <ViewRow key={r.label} r={r} />
      ))}
      <SectionLabel text="LANDSCAPE" className="mt-[8px] mb-[6px] ml-[18px] mr-[18px]" />
      <div className="h-[36px] flex items-center pr-[13px]">
        <div className="w-[20px] h-[20px] ml-[72px]"><IconVisualizers /></div>
        <span className="ml-[13px] text-[20px] text-[#f0f0f0]">Visualizers</span>
        <span className="ml-auto mr-px flex"><MenuChevron /></span>
      </div>
      <div className="h-[36px] flex items-center pr-[13px]">
        <div className="w-[20px] h-[20px] ml-[72px]"><IconLod /></div>
        <span className="ml-[13px] text-[20px] text-[#f0f0f0]">LOD</span>
        <span className="ml-auto mr-px flex"><MenuChevron /></span>
      </div>
      <SectionLabel text="EXPOSURE" className="mt-[7px] ml-[18px] mr-[18px]" />
      <div className="mt-[7px] h-[36px] flex items-center pl-[21px]">
        <div className="w-[27px] h-[27px] rounded-[3px] bg-[#262626] border border-[#555555] flex items-center justify-center">
          <svg className="w-[17px] h-[14px]" viewBox="0 0 17 14" fill="none" stroke="#ffffff" strokeWidth="3">
            <polyline points="1.5,7 6,11.5 15.5,2" />
          </svg>
        </div>
        <span className="ml-[21px] text-[20px] text-[#f0f0f0]">Game Settings</span>
      </div>
      <div className="mt-[2px] h-[39px] flex items-center pl-[67px]">
        <span className="pb-[2px] text-[20px] text-[#f0f0f0]">EV100</span>
        <div className="relative ml-auto mr-[19px] w-[150px] h-[39px] rounded-[6px] bg-[#0f0f0f] border-[3px] border-[#1f1f1f] overflow-hidden flex items-center">
          <div className="w-[52px] h-full bg-[#262626] rounded-[3px] flex items-center justify-end">
            <span className="pb-[2px] text-[20px] text-[#666666] mr-[8px]">1.0</span>
          </div>
        </div>
      </div>
      <SectionLabel text="WIREFRAME" className="mt-[10px] ml-[18px] mr-[18px]" />
      <div className="mt-[9px] h-[39px] flex items-center pl-[67px]">
        <span className="pb-[2px] text-[20px] text-[#f0f0f0]">Opacity</span>
        <div className="relative ml-auto mr-[19px] w-[150px] h-[39px] rounded-[6px] bg-[#0f0f0f] border-[3px] border-[#1f1f1f] overflow-hidden flex items-center">
          <div className="w-[25px] h-full bg-[#333333] rounded-[3px]" />
          <span className="ml-[-7px] pb-[2px] text-[20px] text-[#f0f0f0]">0.2</span>
        </div>
      </div>
    </div>
  );
}

function NaniteRow({ label, on }: { label: string; on?: boolean }) {
  return (
    <div className={`h-[32px] flex items-center pl-[21px] ${on ? "bg-[#0070e0]" : ""}`}>
      <Dot on={on} />
      <span className="ml-[21px] text-[20px] text-[#f0f0f0]">{label}</span>
    </div>
  );
}

function SubMenu() {
  return (
    <div className="absolute left-[614px] top-[625px] w-[325px] bg-[#3a3a3a] pt-[15px] pb-[14px]">
      <SearchBox className="ml-[16px] w-[294px] h-[30px] bg-[#0f0f0f]" />
      <div className="mt-[11px] ml-[18px] mr-[18px]">
        <div className="h-[20px] flex items-center">
          <span className="text-[14px] font-bold tracking-[1.9px] text-[#6e6e6e] whitespace-nowrap">NANITE VISUALIZATION MODE</span>
          <div className="flex-1 h-px bg-[#666666] ml-[20px]" />
        </div>
      </div>
      <div className="mt-[5px]"><NaniteRow label="Overview" /></div>
      <div className="mt-[11px] mb-[9px] ml-[18px] mr-[18px] h-px bg-[#666666]" />
      {naniteRows.map((l) => (
        <NaniteRow key={l} label={l} on={l === "Clusters"} />
      ))}
    </div>
  );
}

function Viewport() {
  return (
    <div className="relative flex-1 ml-[5px] mr-px overflow-hidden bg-black border-x-2 border-b-2 border-t-0 border-[#e5a11c]">
      <Scene />
      <div className="relative h-px bg-[#e5a11c]" />
      <div className="relative h-px bg-[linear-gradient(90deg,#e5a11c_0%,#1a73d0_3%,#1a73d0_55%,#4a8a90_74%,#e5a11c_76%,#e5a11c_100%)]" />
      <ViewportBar />
    </div>
  );
}

export default function App() {
  return (
    <div className="relative w-[2656px] h-[1416px] overflow-hidden bg-[#151515] flex flex-col [font-family:Roboto,sans-serif]">
      <TopBar />
      <div className="h-[9px] shrink-0" />
      <Viewport />
      <svg className="absolute left-[5px] top-[68px] w-[14px] h-[14px]" viewBox="0 0 14 14">
        <polygon points="0,0 14,0 0,14" fill="#0070e0" />
      </svg>
      <MainMenu />
      <SubMenu />
    </div>
  );
}
